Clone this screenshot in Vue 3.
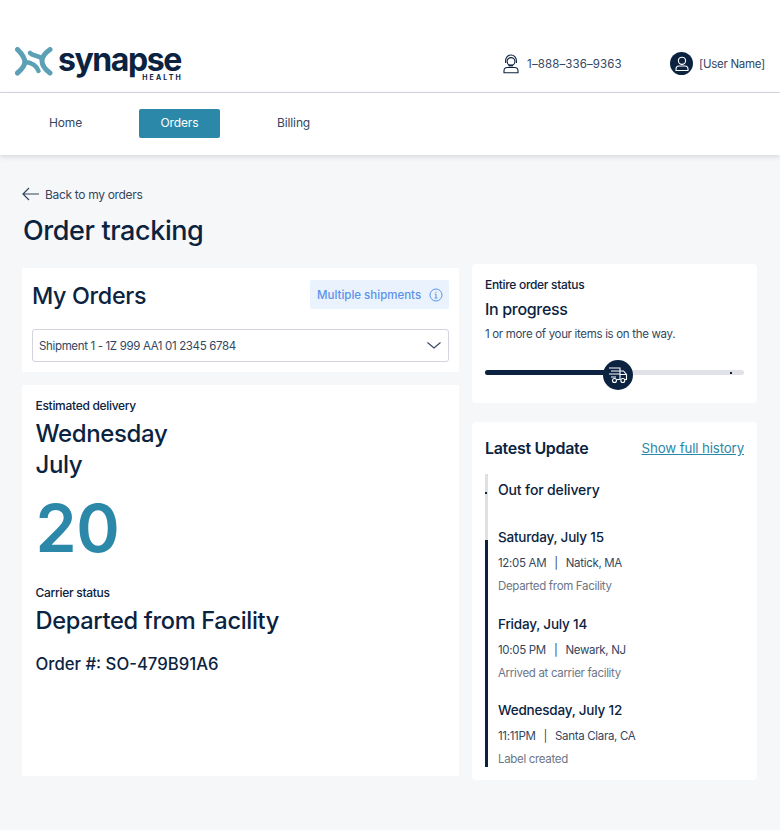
<script setup>
const updates = [
  { date: 'Saturday, July 15', time: '12:05 AM', place: 'Natick, MA', note: 'Departed from Facility' },
  { date: 'Friday, July 14', time: '10:05 PM', place: 'Newark, NJ', note: 'Arrived at carrier facility' },
  { date: 'Wednesday, July 12', time: '11:11PM', place: 'Santa Clara, CA', note: 'Label created' }
]
</script>

<template>
  <div class="page">
    <header class="top">
      <div class="logo">
        <svg class="mark" width="38" height="29" viewBox="0 0 38 29" fill="none" stroke="#5ba0b5" stroke-linecap="round">
          <path d="M2.500 2.500C7 7 10 11 9.800 15C10 19 6 23 2.500 26" stroke-width="5" />
          <path d="M35 2.500C30 6 27 10 27 14C27 19 31 23 35 26" stroke-width="5" />
          <path d="M15 6C18 9.500 24 8 27 12" stroke-width="4.500" />
          <path d="M10 15C15 15.500 21 17 23.500 24" stroke-width="4.500" />
        </svg>
        <div class="word">
          <span class="syn">synapse</span>
          <span class="health">HEALTH</span>
        </div>
      </div>
      <div class="top-right">
        <div class="phone">
          <svg width="16" height="20" viewBox="0 0 16 20" fill="none" stroke="#0b2340" stroke-width="1.100">
            <circle cx="8" cy="7.500" r="3.900" />
            <path d="M2.600 9V6.600C2.600 3.400 5 1 8 1s5.400 2.400 5.400 5.600V9" />
            <path d="M5.500 11.500h4.500" stroke-width="1.800" />
            <path d="M1 18.800V16.800C1 14.900 2.400 13.500 4.300 13.500h7.400c1.900 0 3.300 1.400 3.300 3.300v2z" />
          </svg>
          <span>1–888–336–9363</span>
        </div>
        <div class="user">
          <span class="avatar">
            <svg width="14" height="16" viewBox="0 0 14 16" fill="none" stroke="#fff" stroke-width="1.100">
              <circle cx="7" cy="4.800" r="3.600" />
              <path d="M1 14.500V13c0-1.700 1.300-3 3-3h6c1.700 0 3 1.300 3 3v1.500z" />
            </svg>
          </span>
          <span>[User Name]</span>
        </div>
      </div>
    </header>

    <nav class="nav">
      <a class="nav-item home">Home</a>
      <a class="nav-item active">Orders</a>
      <a class="nav-item billing">Billing</a>
    </nav>

    <main class="main">
      <div class="back">
        <svg width="17" height="14" viewBox="0 0 17 14" fill="none" stroke="#33475f" stroke-width="1.200">
          <path d="M17 7H1M7 1 1 7l6 6" />
        </svg>
        <span>Back to my orders</span>
      </div>
      <h1 class="title">Order tracking</h1>

      <div class="grid">
        <div class="left">
          <section class="card orders">
            <div class="orders-head">
              <h2>My Orders</h2>
              <div class="chip">
                <span>Multiple shipments</span>
                <svg width="14" height="14" viewBox="0 0 14 14" fill="none" stroke="#5b93ea" stroke-width="1">
                  <circle cx="7" cy="7" r="6" />
                  <path d="M5.800 6.200H7V10M5.600 10h2.800M7 3.800v1" />
                </svg>
              </div>
            </div>
            <div class="select">
              <span>Shipment 1 - 1Z 999 AA1 01 2345 6784</span>
              <svg width="14" height="7" viewBox="0 0 14 7" fill="none" stroke="#33475f" stroke-width="1.100">
                <path d="M.5.500 7 6 13.500.5" />
              </svg>
            </div>
          </section>

          <section class="card delivery">
            <div class="label">Estimated delivery</div>
            <div class="day first">Wednesday</div>
            <div class="day">July</div>
            <div class="date">20</div>
            <div class="label carrier">Carrier status</div>
            <div class="status">Departed from Facility</div>
            <div class="order-no">Order #: SO-479B91A6</div>
          </section>
        </div>

        <div class="right">
          <section class="card state">
            <div class="state-label">Entire order status</div>
            <div class="state-title">In progress</div>
            <div class="state-text">1 or more of your items is on the way.</div>
            <div class="track">
              <div class="fill"></div>
              <span class="tick"></span>
              <div class="knob">
                <svg width="20" height="18" viewBox="0 0 20 18" fill="none" stroke="#fff" stroke-width="1.100">
                  <path d="M1 2h11v11.500H9M3 5h9M1 8h11M3 11h5" />
                  <path d="M12 5h3.500l3 3.500v5h-1.500M12 8.500h6.500" />
                  <circle cx="6.500" cy="14.500" r="2" />
                  <circle cx="14.800" cy="14.500" r="2" />
                </svg>
              </div>
            </div>
          </section>

          <section class="card updates">
            <div class="updates-head">
              <h3>Latest Update</h3>
              <a class="history">Show full history</a>
            </div>
            <div class="timeline">
              <span class="rail-dot"></span>
              <div class="current">Out for delivery</div>
              <div v-for="u in updates" :key="u.date" class="item">
                <div class="item-date">{{ u.date }}</div>
                <div class="item-meta">
                  <span>{{ u.time }}</span><span class="pipe">|</span><span>{{ u.place }}</span>
                </div>
                <div class="item-note">{{ u.note }}</div>
              </div>
            </div>
          </section>
        </div>
      </div>
    </main>
  </div>
</template>

<style>
html, body { margin: 0; background: #f6f7f9; }
</style>

<style scoped>
.page {
  width: 780px;
  height: 830px;
  overflow: hidden;
  background: #f6f7f9;
  color: #0b2340;
  font-family: Inter, "Open Sans", sans-serif;
  letter-spacing: -0.02em;
}
.top {
  padding: 45px 15px 0 15px;
  height: 47px;
  display: flex;
  justify-content: space-between;
  background: #fff;
  border-bottom: 1px solid #d6d6e0;
}
.logo { display: flex; gap: 5px; height: 36px; }
.mark { margin-top: 2px; }
.word { display: flex; flex-direction: column; align-items: flex-end; }
.syn {
  font-size: 32px;
  font-weight: 700;
  line-height: 29px;
  letter-spacing: -0.045em;
  color: #0b2340;
}
.health {
  font-size: 7px;
  font-weight: 700;
  letter-spacing: 0.3em;
  line-height: 8px;
  margin-right: -2px;
}
.top-right { display: flex; font-size: 11.500px; color: #33475f; padding-top: 7px; }
.phone { display: flex; align-items: center; gap: 8px; width: 167px; height: 23px; letter-spacing: 0.01em; }
.user { display: flex; align-items: center; gap: 6px; height: 23px; letter-spacing: -0.025em; }
.avatar {
  width: 23px;
  height: 23px;
  border-radius: 50%;
  background: #0b2340;
  display: flex;
  align-items: center;
  justify-content: center;
}
.nav {
  height: 61px;
  padding: 0 0 1px 49px;
  background: #fff;
  display: flex;
  align-items: center;
  box-shadow: 0 2px 5px rgba(30, 40, 60, 0.14);
  font-size: 12px;
  color: #33475f;
}
.nav-item { letter-spacing: -0.01em; }
.home { width: 90px; padding-bottom: 2px; }
.billing { padding-bottom: 2px; }
.active {
  width: 81px;
  height: 29px;
  line-height: 28px;
  text-align: center;
  border-radius: 2px;
  background: #2c88a9;
  color: #fff;
  margin-right: 57px;
}
.main { padding: 31px 23px 0 22px; }
.back {
  display: flex;
  align-items: center;
  gap: 6px;
  font-size: 12px;
  color: #33475f;
  height: 16px;
}
.title {
  margin: 11px 0 0 1px;
  font-size: 27px;
  font-weight: 550;
  line-height: 36px;
  letter-spacing: -0.015em;
  color: #0b2340;
}
.grid {
  display: grid;
  grid-template-columns: 437px 285px;
  column-gap: 13px;
  margin-top: 15px;
}
.left { display: flex; flex-direction: column; gap: 13px; padding-top: 4px; }
.right { display: flex; flex-direction: column; gap: 19px; }
.card { background: #fff; box-sizing: border-box; }
.orders { height: 104px; padding: 12px 10px 0; }
.orders-head { display: flex; justify-content: space-between; align-items: flex-start; }
h2 {
  margin: 0;
  font-size: 23.300px;
  font-weight: 500;
  line-height: 32px;
}
.chip {
  width: 139px;
  height: 29px;
  box-sizing: border-box;
  padding: 0 6px 0 7px;
  display: flex;
  align-items: center;
  justify-content: space-between;
  background: #e9f2fd;
  border-radius: 2px;
  font-size: 11.500px;
  font-weight: 500;
  color: #5b93ea;
  letter-spacing: 0;
}
.select {
  margin-top: 17px;
  height: 33px;
  box-sizing: border-box;
  border: 1px solid #d3d4de;
  border-radius: 3px;
  padding: 0 7px 0 6px;
  display: flex;
  align-items: center;
  justify-content: space-between;
  font-size: 11.500px;
  letter-spacing: -0.03em;
  color: #33475f;
}
.delivery { height: 391px; padding: 14px 13.500px 0; }
.label { font-size: 12px; line-height: 14px; font-weight: 500; letter-spacing: -0.025em; }
.day { font-size: 24px; font-weight: 500; line-height: 32px; letter-spacing: -0.015em; }
.first { margin-top: 5px; line-height: 31px; }
.date {
  font-size: 66px;
  font-weight: 600;
  line-height: 80px;
  color: #2c88a9;
  margin-top: 7px;
}
.carrier { margin-top: 18px; }
.status { font-size: 23.600px; font-weight: 500; line-height: 32px; margin-top: 5px; }
.order-no { font-size: 16.700px; font-weight: 500; line-height: 22px; margin-top: 16px; letter-spacing: 0; }
.state { height: 139px; padding: 14px 13px 0; border-radius: 4px; }
.state-label { font-size: 12px; font-weight: 500; line-height: 14px; }
.state-title { font-size: 16px; font-weight: 500; line-height: 22px; margin-top: 6px; }
.state-text { font-size: 11.500px; line-height: 16px; margin-top: 6px; color: #33475f; }
.track {
  position: relative;
  height: 5px;
  margin-top: 28px;
  background: #e1e2e7;
  border-radius: 3px;
}
.fill { width: 50%; height: 100%; background: #0b2340; border-radius: 3px; }
.tick {
  position: absolute;
  left: 245px;
  top: 2px;
  width: 2px;
  height: 2px;
  background: #0b2340;
}
.knob {
  position: absolute;
  left: 118px;
  top: -10px;
  width: 30px;
  height: 30px;
  border-radius: 50%;
  background: #0b2340;
  display: flex;
  align-items: center;
  justify-content: center;
}
.updates { height: 358px; padding: 16px 13px 0; border-radius: 4px; }
.updates-head { display: flex; justify-content: space-between; align-items: center; height: 20px; }
h3 { margin: 0; font-size: 16px; font-weight: 600; }
.history { font-size: 13.300px; color: #2c88a9; text-decoration: underline; letter-spacing: -0.01em; }
.timeline {
  position: relative;
  margin-top: 16px;
  height: 293px;
  box-sizing: border-box;
  padding: 7px 0 0 13px;
  background: linear-gradient(#dfe0e5 66px, #0b2340 66px) left top / 3px 100% no-repeat;
}
.rail-dot {
  position: absolute;
  left: 0;
  top: 18px;
  width: 2px;
  height: 2px;
  background: #0b2340;
}
.current { font-size: 14px; font-weight: 500; line-height: 18px; margin-bottom: 29px; letter-spacing: -0.01em; }
.item { height: 86.500px; }
.item-date { font-size: 13.500px; font-weight: 500; line-height: 18px; letter-spacing: -0.015em; }
.item-meta { font-size: 11.500px; line-height: 16px; margin-top: 9px; color: #33475f; }
.pipe { margin: 0 8px; }
.item-note { font-size: 11.500px; line-height: 16px; margin-top: 7px; color: #6d7688; }
</style>
